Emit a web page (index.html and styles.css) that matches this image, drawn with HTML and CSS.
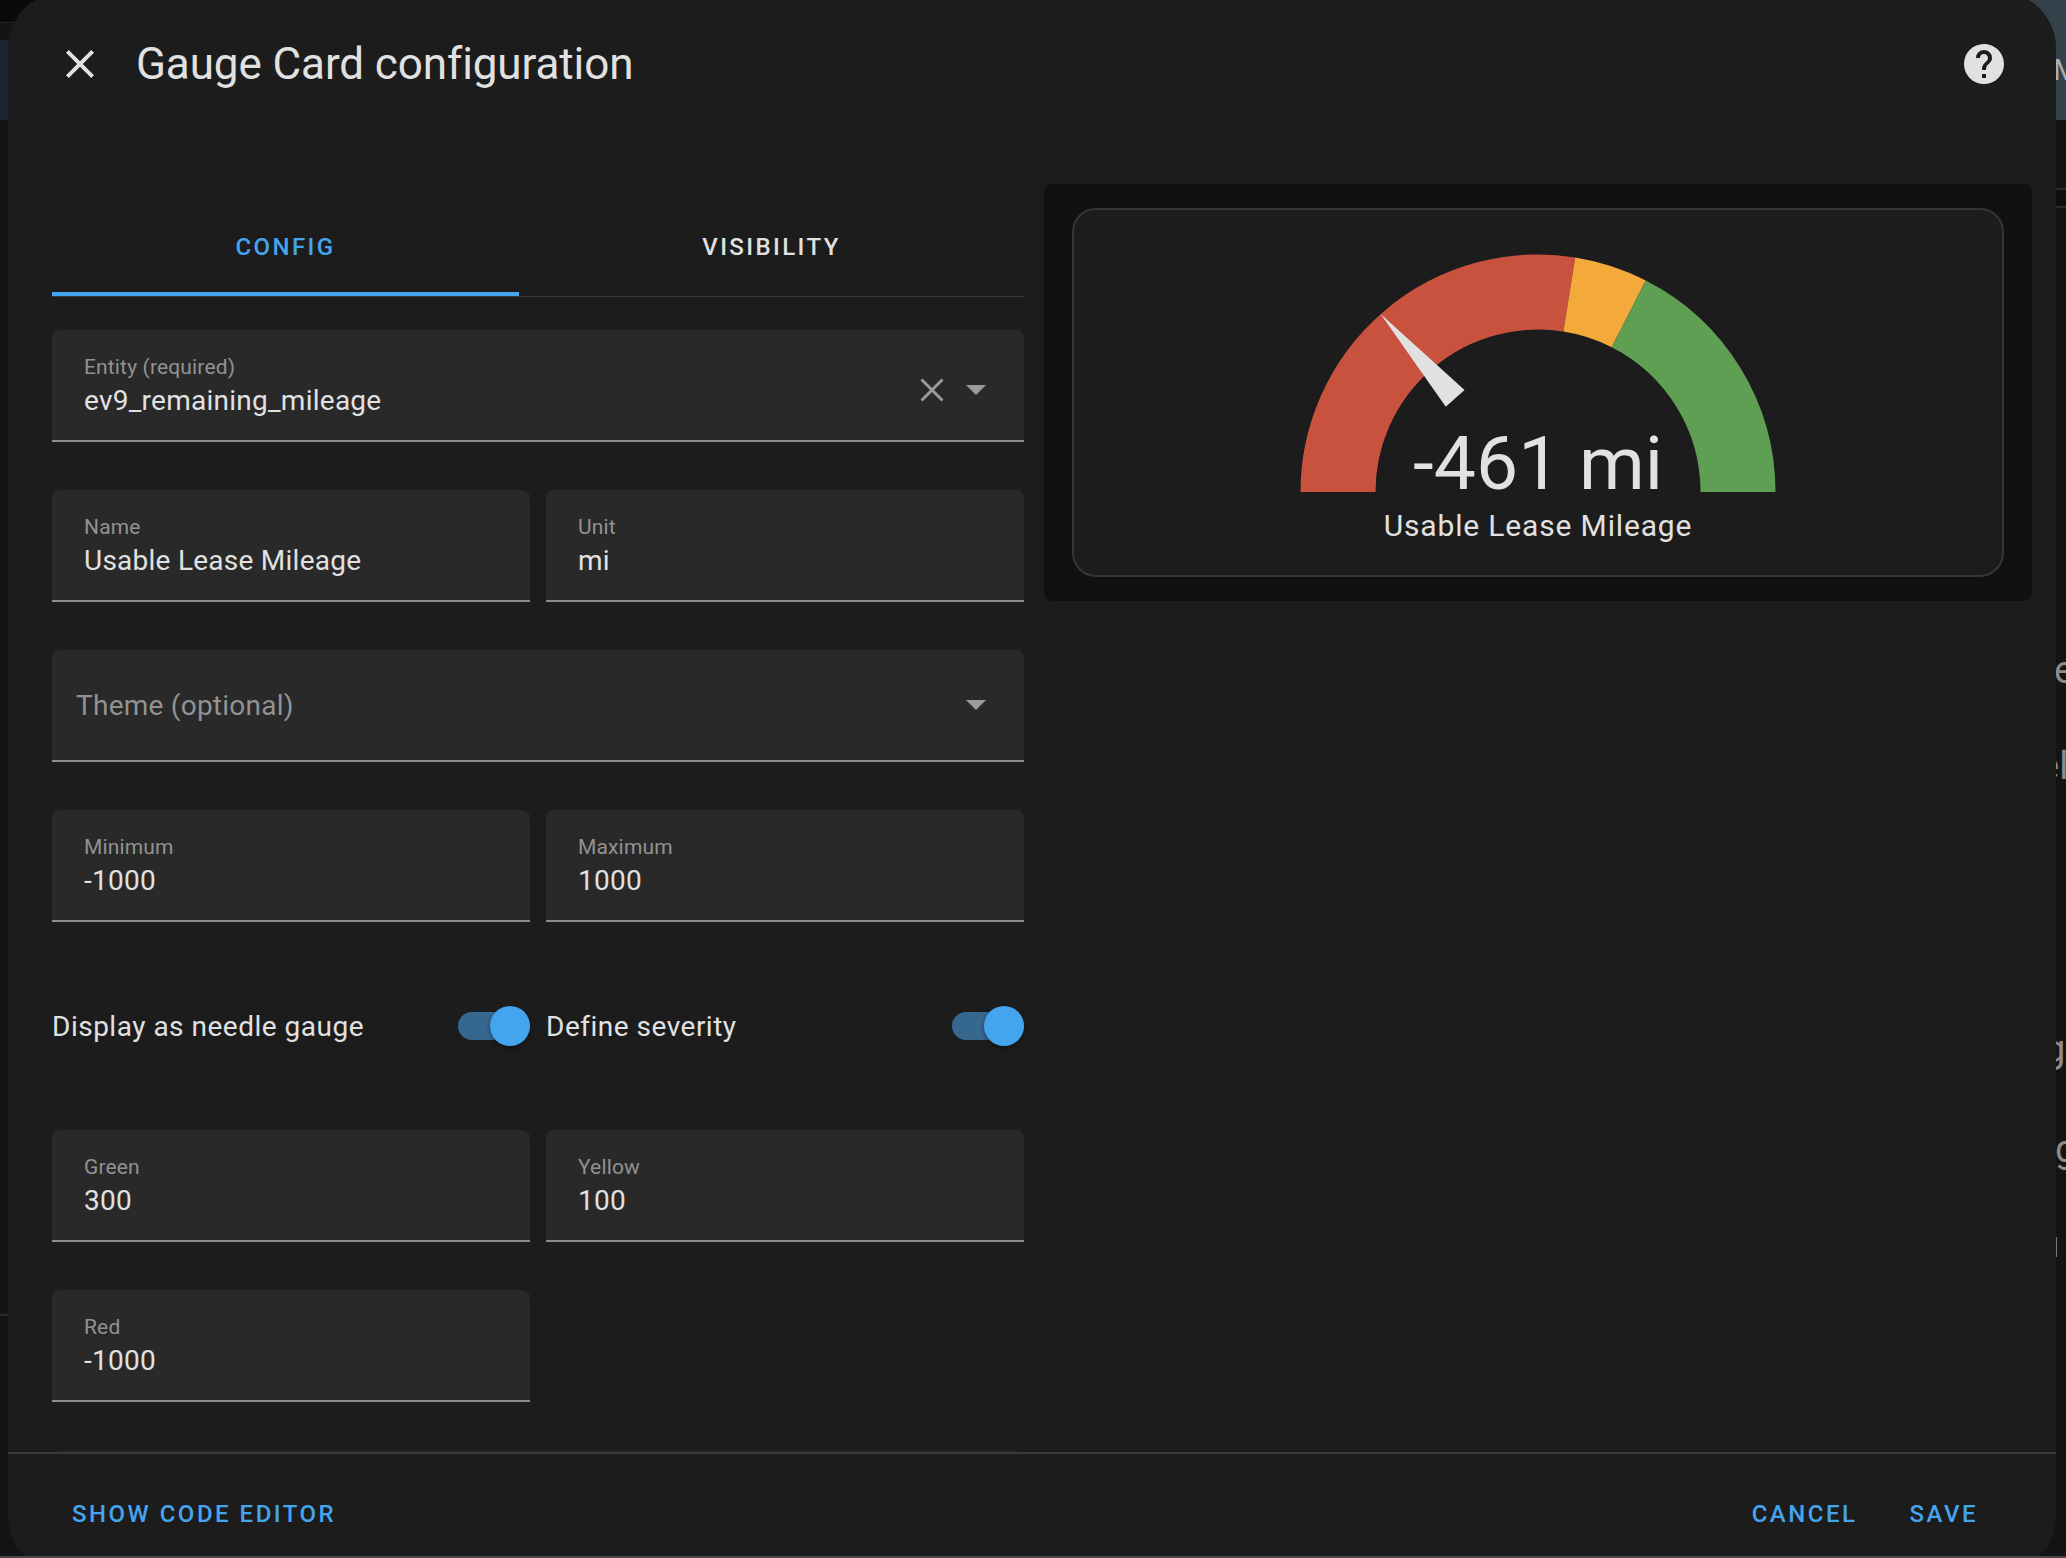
FILE: index.html
```html
<!DOCTYPE html>
<html lang="en">
<head>
    <meta charset="UTF-8">
    <title>Gauge Card configuration</title>
    <link rel="stylesheet" href="styles.css">
</head>
<body>
    <!-- page behind the dialog, only slivers show -->
    <div class="behind-left">
        <div class="behind-left-top"></div>
        <div class="behind-left-bar"></div>
        <div class="behind-left-line"></div>
    </div>
    <div class="behind-right">
        <div class="behind-right-top"><span class="behind-m">M</span></div>
        <div class="behind-right-slot"></div>
        <span class="behind-text behind-e1">e</span>
        <span class="behind-text behind-e2">el</span>
        <span class="behind-text behind-g1">g</span>
        <span class="behind-text behind-g2">g</span>
        <div class="behind-tick"></div>
    </div>

    <div class="dialog">
        <div class="dialog-header">
            <svg class="icon-close" viewBox="0 0 24 24"><path d="M19,6.41L17.59,5L12,10.59L6.41,5L5,6.41L10.59,12L5,17.59L6.41,19L12,13.41L17.59,19L19,17.59L13.41,12L19,6.41Z"/></svg>
            <h2 class="dialog-title">Gauge Card configuration</h2>
            <svg class="icon-help" viewBox="0 0 24 24"><path d="M15.07,11.25L14.17,12.17C13.45,12.89 13,13.5 13,15H11V14.5C11,13.39 11.45,12.39 12.17,11.67L13.41,10.41C13.78,10.05 14,9.55 14,9C14,7.89 13.1,7 12,7A2,2 0 0,0 10,9H8A4,4 0 0,1 12,5A4,4 0 0,1 16,9C16,9.88 15.64,10.67 15.07,11.25M13,19H11V17H13M12,2A10,10 0 0,0 2,12A10,10 0 0,0 12,22A10,10 0 0,0 22,12C22,6.47 17.5,2 12,2Z"/></svg>
        </div>

        <div class="dialog-body">
            <div class="editor">
                <div class="tabs">
                    <div class="tab tab-active">CONFIG</div>
                    <div class="tab">VISIBILITY</div>
                </div>

                <div class="form">
                    <div class="field field-wide">
                        <div class="field-label">Entity (required)</div>
                        <div class="field-value">ev9_remaining_mileage</div>
                        <div class="field-icons field-icons-low">
                            <svg class="icon-clear" viewBox="0 0 24 24"><path d="M1.5 1.5L22.5 22.5M22.5 1.5L1.5 22.5"/></svg>
                            <div class="caret"></div>
                        </div>
                    </div>

                    <div class="field">
                        <div class="field-label">Name</div>
                        <div class="field-value">Usable Lease Mileage</div>
                    </div>
                    <div class="field">
                        <div class="field-label">Unit</div>
                        <div class="field-value">mi</div>
                    </div>

                    <div class="field field-wide field-empty">
                        <div class="field-placeholder">Theme (optional)</div>
                        <div class="field-icons">
                            <div class="caret"></div>
                        </div>
                    </div>

                    <div class="field">
                        <div class="field-label">Minimum</div>
                        <div class="field-value">-1000</div>
                    </div>
                    <div class="field">
                        <div class="field-label">Maximum</div>
                        <div class="field-value">1000</div>
                    </div>

                    <div class="toggle-row">
                        <span>Display as needle gauge</span>
                        <div class="switch"><div class="switch-thumb"></div></div>
                    </div>
                    <div class="toggle-row">
                        <span>Define severity</span>
                        <div class="switch"><div class="switch-thumb"></div></div>
                    </div>

                    <div class="field">
                        <div class="field-label">Green</div>
                        <div class="field-value">300</div>
                    </div>
                    <div class="field">
                        <div class="field-label">Yellow</div>
                        <div class="field-value">100</div>
                    </div>

                    <div class="field">
                        <div class="field-label">Red</div>
                        <div class="field-value">-1000</div>
                    </div>

                    <div class="field field-wide field-next"></div>
                </div>
            </div>

            <div class="preview">
                <div class="gauge-card">
                    <svg class="gauge" viewBox="-50 -50 100 50">
                        <path class="arc-red" d="M -40 0 A 40 40 0 0 1 6.26 -39.51"/>
                        <path class="arc-yellow" d="M 6.26 -39.51 A 40 40 0 0 1 18.16 -35.64"/>
                        <path class="arc-green" d="M 18.16 -35.64 A 40 40 0 0 1 40 0"/>
                        <path class="needle" d="M -25 -2.5 L -47.5 0 L -25 2.5 z" transform="rotate(48.5)"/>
                        <text class="gauge-value" x="0" y="-0.6">-461 mi</text>
                    </svg>
                    <div class="gauge-name">Usable Lease Mileage</div>
                </div>
            </div>
        </div>

        <div class="dialog-footer">
            <button class="text-btn">SHOW CODE EDITOR</button>
            <div class="footer-right">
                <button class="text-btn">CANCEL</button>
                <button class="text-btn">SAVE</button>
            </div>
        </div>
    </div>
</body>
</html>
```

FILE: styles.css
```css
* {
    box-sizing: border-box;
}

html, body {
    height: 100%;
    overflow: hidden;
}

body {
    margin: 0;
    position: relative;
    background-color: #141414;
    color: #e1e1e1;
    font-family: Roboto, "Liberation Sans", sans-serif;
    border-bottom: 2px solid #484848;
}

/* page behind */
.behind-left {
    position: absolute;
    left: 0;
    top: 0;
    width: 40px;
    height: 100%;
}

.behind-left-top {
    height: 23px;
    background-color: #0a0a0a;
    border-bottom: 1px solid #222;
}

.behind-left-bar {
    height: 80px;
    margin-top: 17px;
    background-color: #1a2733;
}

.behind-left-line {
    height: 2px;
    margin-top: 1194px;
    background-color: #2a2a2a;
}

.behind-right {
    position: absolute;
    right: 0;
    top: 0;
    width: 60px;
    height: 100%;
    overflow: hidden;
}

.behind-right-top {
    position: relative;
    height: 120px;
    background-color: #33414a;
}

.behind-m {
    position: absolute;
    left: 47px;
    top: 52px;
    font-size: 30px;
    color: #a9b0b4;
}

.behind-right-slot {
    height: 20px;
    margin-top: 68px;
    background-color: #0e0e0e;
    border-top: 2px solid #2a2a2a;
    border-bottom: 2px solid #2a2a2a;
}

.behind-text {
    position: absolute;
    font-size: 38px;
    line-height: 44px;
    color: #8c8c8c;
}

.behind-e1 { left: 48px; top: 648px; }
.behind-e2 { left: 33px; top: 744px; }
.behind-g1 { left: 38px; top: 1027px; }
.behind-g2 { left: 49px; top: 1127px; }

.behind-tick {
    position: absolute;
    left: 50px;
    top: 1237px;
    width: 1px;
    height: 20px;
    background-color: #777;
}

/* dialog */
.dialog {
    position: absolute;
    left: 8px;
    top: -8px;
    width: 2048px;
    height: 1580px;
    display: flex;
    flex-direction: column;
    background-color: #1c1c1c;
    border-radius: 56px;
    overflow: hidden;
}

.dialog-header {
    flex: none;
    height: 192px;
    padding: 8px 48px 0 48px;
    display: flex;
    align-items: flex-start;
}

.icon-close {
    flex: none;
    width: 48px;
    height: 48px;
    margin-top: 40px;
    fill: #e1e1e1;
}

.dialog-title {
    flex: 1;
    margin: 32px 0 0 32px;
    font-size: 44px;
    line-height: 64px;
    font-weight: 400;
    letter-spacing: -0.1px;
    color: #e1e1e1;
}

.icon-help {
    flex: none;
    width: 48px;
    height: 48px;
    margin: 40px 0 0 0;
    fill: #e1e1e1;
}

.dialog-body {
    flex: 1;
    min-height: 0;
    overflow: hidden;
    padding-left: 44px;
    display: flex;
    align-items: flex-start;
    border-bottom: 2px solid #3a3a3a;
}

.editor {
    flex: none;
    width: 972px;
}

/* tabs */
.tabs {
    display: grid;
    grid-template-columns: 467px 505px;
    height: 113px;
    border-bottom: 1px solid #3a3a3a;
}

.tab {
    display: flex;
    align-items: center;
    justify-content: center;
    height: 112px;
    padding-top: 18px;
    border-bottom: 4px solid transparent;
    font-size: 24px;
    font-weight: 500;
    letter-spacing: 2.4px;
    color: #e1e1e1;
}

.tab-active {
    color: #45a4ee;
    border-bottom-color: #45a4ee;
}

/* form */
.form {
    display: grid;
    grid-template-columns: 478px 478px;
    column-gap: 16px;
    row-gap: 48px;
    margin-top: 33px;
}

.field {
    position: relative;
    height: 112px;
    padding: 24px 48px 0 32px;
    background-color: #292929;
    border-radius: 8px 8px 0 0;
    border-bottom: 2px solid #8c8c8c;
}

.field-wide {
    grid-column: 1 / 3;
}

.field-label {
    font-size: 21px;
    line-height: 27px;
    letter-spacing: 0.15px;
    color: #929292;
}

.field-value {
    font-size: 28px;
    line-height: 40px;
    letter-spacing: 0.25px;
    color: #e1e1e1;
}

.field-empty {
    padding: 0 48px 0 24px;
    display: flex;
    align-items: center;
}

.field-placeholder {
    font-size: 28px;
    letter-spacing: 0.25px;
    color: #929292;
}

.field-icons {
    position: absolute;
    right: 38px;
    top: 0;
    height: 110px;
    display: flex;
    align-items: center;
    gap: 22px;
}

.field-icons-low {
    padding-top: 10px;
}

.icon-clear {
    width: 24px;
    height: 24px;
    stroke: #9a9a9a;
    stroke-width: 3;
    fill: none;
}

.caret {
    width: 0;
    height: 0;
    border-left: 10px solid transparent;
    border-right: 10px solid transparent;
    border-top: 10px solid #9a9a9a;
}

.field-next {
    margin-left: 3px;
    margin-right: 3px;
    background-color: #232323;
}

/* switches */
.toggle-row {
    height: 112px;
    display: flex;
    align-items: center;
    justify-content: space-between;
    font-size: 28px;
    letter-spacing: 0.5px;
    color: #e1e1e1;
}

.switch {
    position: relative;
    width: 72px;
    height: 28px;
    background-color: #36678f;
    border-radius: 14px;
}

.switch-thumb {
    position: absolute;
    right: 0;
    top: -6px;
    width: 40px;
    height: 40px;
    border-radius: 50%;
    background-color: #45a4ee;
    box-shadow: 0 2px 4px rgba(0, 0, 0, 0.4);
}

/* preview */
.preview {
    flex: none;
    width: 988px;
    height: 417px;
    margin-left: 20px;
    padding: 24px 28px;
    background-color: #111;
    border-radius: 8px;
}

.gauge-card {
    height: 369px;
    padding-top: 32px;
    display: flex;
    flex-direction: column;
    align-items: center;
    background-color: #1c1c1c;
    border: 2px solid #363636;
    border-radius: 24px;
}

.gauge {
    display: block;
    flex: none;
    width: 500px;
    height: 250px;
    fill: none;
    overflow: visible;
}

.gauge path {
    stroke-width: 15;
}

.arc-red { stroke: #c9523f; }
.arc-yellow { stroke: #f4a93b; }
.arc-green { stroke: #5e9f53; }

.gauge path.needle {
    fill: #e1e1e1;
    stroke: none;
}

.gauge-value {
    fill: #e1e1e1;
    font-size: 15px;
    text-anchor: middle;
}

.gauge-name {
    margin-top: 14px;
    font-size: 30px;
    line-height: 40px;
    letter-spacing: 0.84px;
    color: #e1e1e1;
}

/* footer */
.dialog-footer {
    flex: none;
    height: 118px;
    padding: 2px 78px 0 64px;
    display: flex;
    align-items: center;
    justify-content: space-between;
}

.footer-right {
    display: flex;
    gap: 52px;
}

.text-btn {
    padding: 0;
    background: none;
    border: none;
    font-family: inherit;
    font-size: 24px;
    font-weight: 500;
    letter-spacing: 2.5px;
    color: #45a4ee;
    cursor: pointer;
}
```
